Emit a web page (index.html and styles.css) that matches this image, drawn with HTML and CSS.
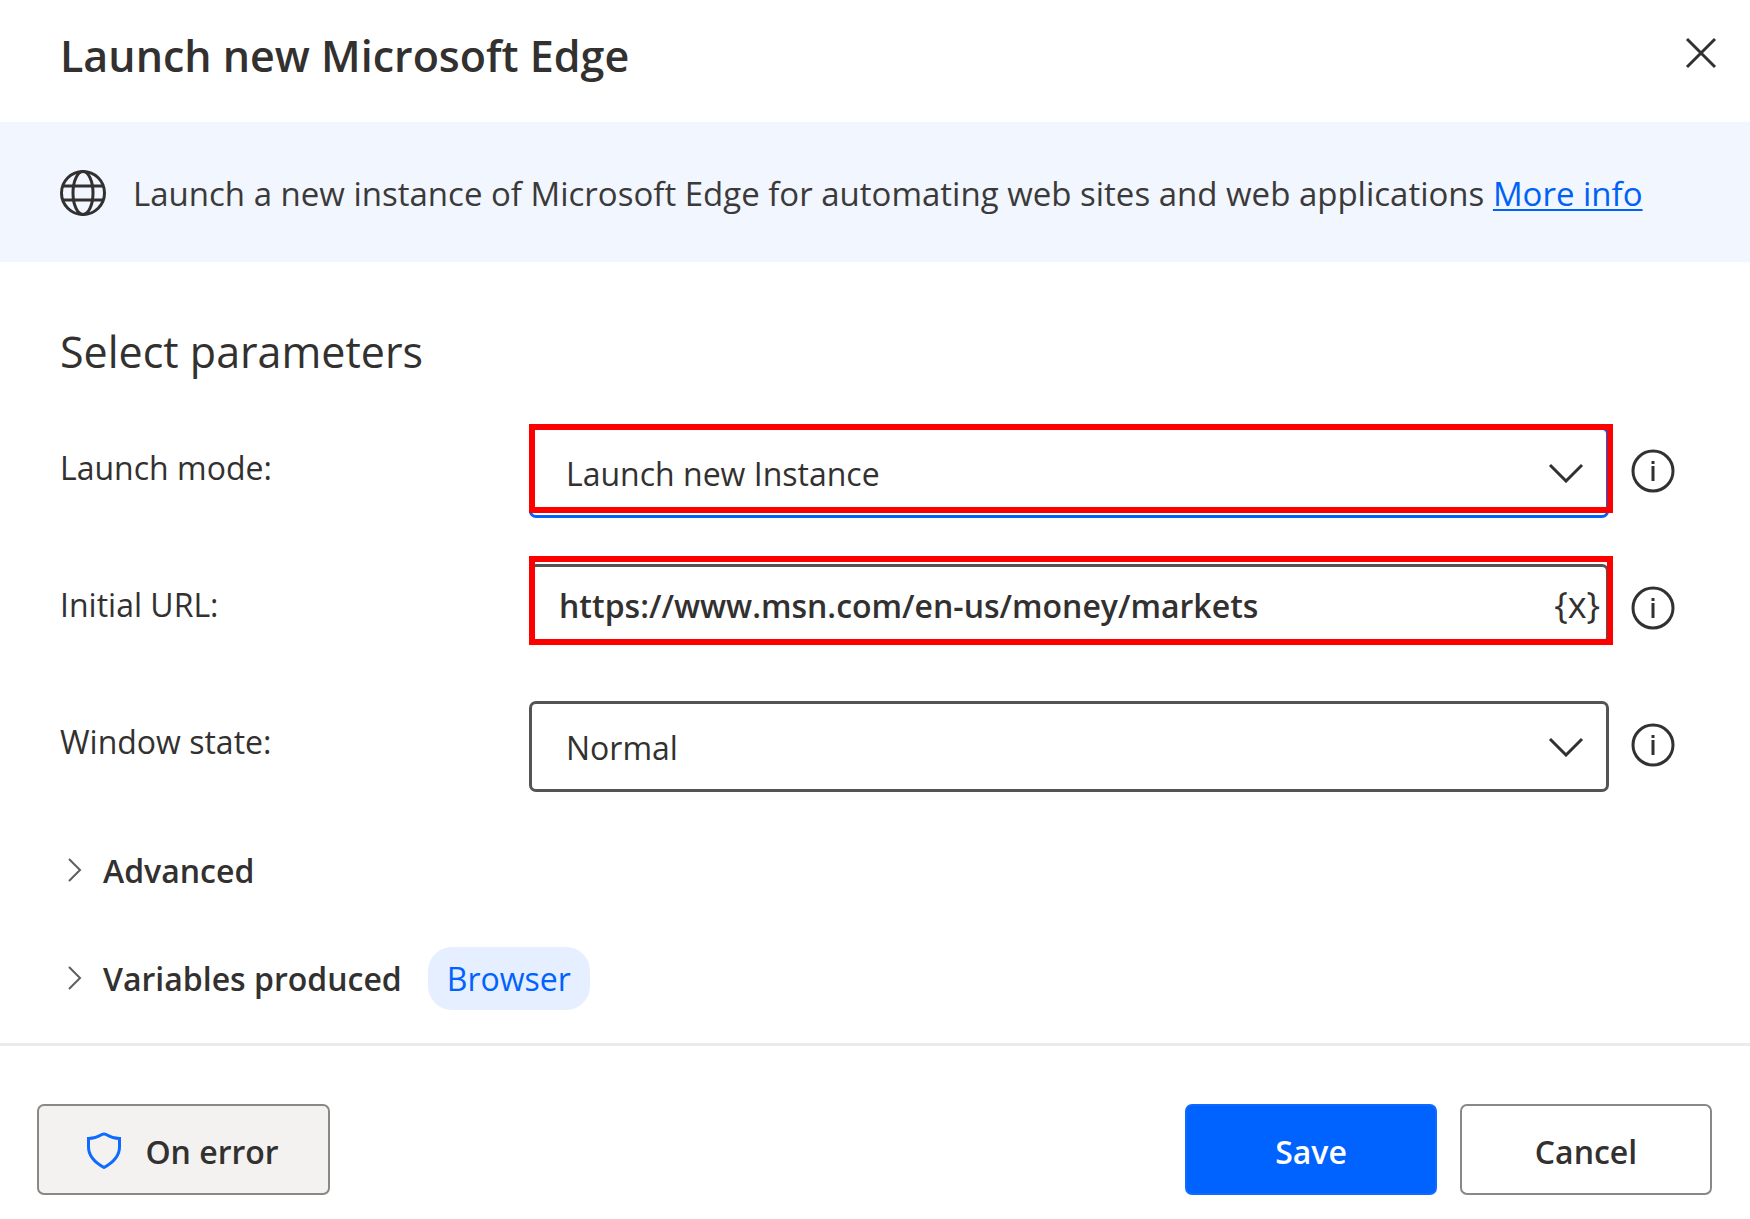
FILE: index.html
```
<!DOCTYPE html>
<html lang="en">
<head>
  <meta charset="utf-8">
  <title>Launch new Microsoft Edge</title>
  <link rel="stylesheet" href="styles.css">
</head>
<body>
  <form class="dialog">
    <header class="dialog-header">
      <h1>Launch new Microsoft Edge</h1>
      <button type="button" class="icon-btn close" aria-label="Close">
        <svg width="32" height="32" viewBox="0 0 32 32"><path d="M2 2 30 30M30 2 2 30"/></svg>
      </button>
    </header>

    <div class="banner">
      <svg class="globe" width="46" height="46" viewBox="0 0 46 46">
        <circle cx="23" cy="23" r="21.5"/>
        <ellipse cx="23" cy="23" rx="10" ry="21.5"/>
        <path d="M3 16H43M3 30H43"/>
      </svg>
      <p>Launch a new instance of Microsoft Edge for automating web sites and web applications <a href="#">More info</a></p>
    </div>

    <main class="content">
      <h2>Select parameters</h2>

      <div class="params">
        <div class="row">
          <label for="mode">Launch mode:</label>
          <div class="field active marked">
            <select id="mode">
              <option>Launch new Instance</option>
              <option>Attach to running instance</option>
            </select>
            <svg class="arrow" width="36" height="20" viewBox="0 0 36 20"><path d="M2 2 18 18 34 2"/></svg>
          </div>
          <button type="button" class="icon-btn info" aria-label="About launch mode">
            <svg width="44" height="44" viewBox="0 0 44 44"><circle cx="22" cy="22" r="20"/><path d="M22 17V32M22 12V15"/></svg>
          </button>
        </div>

        <div class="row">
          <label for="url">Initial URL:</label>
          <div class="field short marked">
            <input type="text" id="url" value="https://www.msn.com/en-us/money/markets">
            <button type="button" class="icon-btn variable" aria-label="Select variable">{x}</button>
          </div>
          <button type="button" class="icon-btn info" aria-label="About initial URL">
            <svg width="44" height="44" viewBox="0 0 44 44"><circle cx="22" cy="22" r="20"/><path d="M22 17V32M22 12V15"/></svg>
          </button>
        </div>

        <div class="row">
          <label for="state">Window state:</label>
          <div class="field">
            <select id="state">
              <option>Normal</option>
              <option>Maximized</option>
              <option>Minimized</option>
            </select>
            <svg class="arrow" width="36" height="20" viewBox="0 0 36 20"><path d="M2 2 18 18 34 2"/></svg>
          </div>
          <button type="button" class="icon-btn info" aria-label="About window state">
            <svg width="44" height="44" viewBox="0 0 44 44"><circle cx="22" cy="22" r="20"/><path d="M22 17V32M22 12V15"/></svg>
          </button>
        </div>
      </div>

      <div class="sections">
        <div class="section">
          <button type="button" class="expander">
            <svg width="16" height="24" viewBox="0 0 16 24"><path d="M2 1 13 12 2 23"/></svg>
            Advanced
          </button>
        </div>
        <div class="section">
          <button type="button" class="expander">
            <svg width="16" height="24" viewBox="0 0 16 24"><path d="M2 1 13 12 2 23"/></svg>
            Variables produced
          </button>
          <span class="chip">Browser</span>
        </div>
      </div>
    </main>

    <footer class="dialog-footer">
      <button type="button" class="btn btn-error">
        <svg width="36" height="40" viewBox="0 0 36 40"><path d="M18 2C13.500 2 14 6 2.500 6.500V15C2.500 24 8 30 18 35.500 28 30 33.500 24 33.500 15V6.500C22 6 22.500 2 18 2Z"/></svg>
        On error
      </button>
      <button type="submit" class="btn btn-primary">Save</button>
      <button type="button" class="btn">Cancel</button>
    </footer>
  </form>
</body>
</html>
```

FILE: styles.css
```
* {
  box-sizing: border-box;
}

body {
  margin: 0;
  background-color: #fff;
  color: #323130;
  font-family: 'Segoe UI', 'Open Sans', 'Noto Sans', sans-serif;
  font-size: 32px;
}

h1, h2, p {
  margin: 0;
}

button, input, select {
  font: inherit;
  color: inherit;
}

svg {
  flex: none;
  fill: none;
  stroke: #323130;
  stroke-width: 3;
}

.icon-btn {
  display: flex;
  align-items: center;
  justify-content: center;
  padding: 0;
  border: none;
  background: none;
  cursor: pointer;
}

.dialog-header {
  display: flex;
  justify-content: space-between;
  align-items: flex-start;
  height: 122px;
  padding: 27px 33px 0 60px;
}

.dialog-header h1 {
  font-size: 43px;
  font-weight: 600;
  line-height: 58px;
}

.close {
  height: 52px;
}

.banner {
  display: flex;
  align-items: center;
  gap: 27px;
  min-height: 140px;
  padding: 2px 60px 0;
  background-color: #f1f6ff;
  color: #3b3a39;
  font-size: 33px;
}

.banner a {
  color: #0062f5;
  text-decoration-thickness: 2px;
  text-underline-offset: 3px;
}

.content {
  padding: 60px 75px 33px 60px;
}

.content h2 {
  margin-bottom: 45px;
  font-size: 43px;
  font-weight: 400;
  line-height: 60px;
}

.params {
  display: flex;
  flex-direction: column;
  gap: 46px;
}

.row {
  display: flex;
  align-items: flex-start;
  height: 91px;
}

.row label {
  width: 469px;
  line-height: 82px;
}

.info {
  height: 87px;
  margin-left: 22px;
}

.field {
  position: relative;
  display: flex;
  flex: 1;
  align-items: center;
  height: 91px;
  border: 3px solid #555452;
  border-radius: 7px;
}

.field.active {
  border-color: #0062ff;
}

.field.short {
  height: 80px;
}

/* red highlight frame around a field */
.marked::after {
  content: '';
  position: absolute;
  inset: -6px -7px 2px -3px;
  border: 6px solid #f00;
  pointer-events: none;
}

.short.marked::after {
  inset: -11px -7px -4px -3px;
}

.field select,
.field input {
  flex: 1;
  width: 100%;
  height: 100%;
  padding: 2px 80px 0 34px;
  border: none;
  background: none;
  outline: none;
  appearance: none;
}

.field input {
  padding: 3px 16px 0 27px;
  font-weight: 600;
}

.arrow {
  position: absolute;
  right: 22px;
  pointer-events: none;
}

.variable {
  padding-right: 6px;
  font-size: 36px;
}

.sections {
  display: flex;
  flex-direction: column;
  gap: 44px;
  margin-top: 46px;
}

.section {
  display: flex;
  align-items: center;
  gap: 26px;
  height: 64px;
}

.expander {
  display: flex;
  align-items: center;
  gap: 20px;
  padding: 0 0 0 7px;
  border: none;
  background: none;
  font-weight: 600;
  cursor: pointer;
}

.expander svg {
  stroke: #605e5c;
  stroke-width: 2;
}

.chip {
  padding: 0 19px;
  border-radius: 24px;
  background-color: #e6efff;
  color: #0062ff;
  line-height: 63px;
}

.dialog-footer {
  display: flex;
  gap: 23px;
  padding: 58px 38px 22px 37px;
  border-top: 3px solid #edebe9;
}

.btn {
  display: flex;
  align-items: center;
  justify-content: center;
  width: 252px;
  height: 91px;
  padding: 4px 0 0;
  border: 2px solid #8a8886;
  border-radius: 7px;
  background-color: #fff;
  font-weight: 600;
  cursor: pointer;
}

.btn-primary {
  border-color: #0f6bff;
  background-color: #0062ff;
  color: #fff;
}

.btn-error {
  gap: 23px;
  width: 293px;
  margin-right: auto;
  padding-right: 2px;
  background-color: #f3f2f1;
}

.btn-error svg {
  stroke: #0f6bff;
}
```
